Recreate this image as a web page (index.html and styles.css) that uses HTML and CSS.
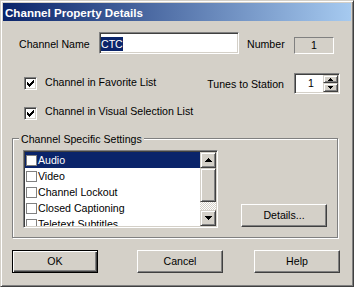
FILE: index.html
```html
<!DOCTYPE html>
<html>
<head>
<meta charset="utf-8">
<title>Channel Property Details</title>
<link rel="stylesheet" href="styles.css">
</head>
<body>
<div class="window">
  <div class="titlebar">Channel Property Details</div>
  <div class="content">
    <div class="row row-name">
      <span class="lbl lbl-name">Channel Name</span>
      <div class="edit"><span class="sel">CTC</span></div>
      <span class="lbl lbl-number">Number</span>
      <div class="static-box">1</div>
    </div>
    <div class="row row-fav">
      <span class="check"><svg width="9" height="9" viewBox="0 0 9 9"><path d="M1 3h1v1h1v1h1V4h1V3h1V2h1V1h1v3H7v1H6v1H5v1H4v1H3V7H2V6H1z"/></svg></span>
      <span class="lbl cb-text">Channel in Favorite List</span>
      <span class="lbl lbl-tunes">Tunes to Station</span>
      <div class="spin">
        <span class="spin-val">1</span>
        <div class="spin-btns">
          <div class="spin-btn up"><svg width="5" height="3" viewBox="0 0 5 3"><path d="M2 0h1v1h1v1h1v1H0V2h1V1h1z"/></svg></div>
          <div class="spin-btn down"><svg width="5" height="3" viewBox="0 0 5 3"><path d="M0 0h5v1H4v1H3v1H2V2H1V1H0z"/></svg></div>
        </div>
      </div>
    </div>
    <div class="row row-vis">
      <span class="check"><svg width="9" height="9" viewBox="0 0 9 9"><path d="M1 3h1v1h1v1h1V4h1V3h1V2h1V1h1v3H7v1H6v1H5v1H4v1H3V7H2V6H1z"/></svg></span>
      <span class="lbl cb-text">Channel in Visual Selection List</span>
    </div>
    <div class="group">
      <div class="group-title">Channel Specific Settings</div>
      <div class="group-body">
        <div class="listbox">
          <ul class="items">
            <li class="selected"><span class="lcb"></span>Audio</li>
            <li><span class="lcb"></span>Video</li>
            <li><span class="lcb"></span>Channel Lockout</li>
            <li><span class="lcb"></span>Closed Captioning</li>
            <li><span class="lcb"></span>Teletext Subtitles</li>
          </ul>
          <div class="vscroll">
            <div class="sb-btn"><svg width="7" height="4" viewBox="0 0 7 4"><path d="M3 0h1v1h1v1h1v1h1v1H0V3h1V2h1V1h1z"/></svg></div>
            <div class="sb-thumb"></div>
            <div class="sb-track"></div>
            <div class="sb-btn"><svg width="7" height="4" viewBox="0 0 7 4"><path d="M0 0h7v1H6v1H5v1H4v1H3V3H2V2H1V1H0z"/></svg></div>
          </div>
        </div>
        <div class="btn btn-details">Details...</div>
      </div>
    </div>
    <div class="buttons">
      <div class="btn btn-default">OK</div>
      <div class="btn btn-cancel">Cancel</div>
      <div class="btn btn-help">Help</div>
    </div>
  </div>
</div>
</body>
</html>
```
FILE: styles.css
```css
* { box-sizing: border-box; }
html, body { margin: 0; padding: 0; }
body {
  width: 354px;
  height: 287px;
  overflow: hidden;
  background: #D4D0C8;
  font-family: "Liberation Sans", Arial, sans-serif;
  font-size: 10.6px;
  color: #000;
}
.window {
  width: 354px;
  height: 287px;
  border: 1px solid;
  border-color: #D4D0C8 #404040 #404040 #D4D0C8;
  box-shadow: inset 1px 1px #fff, inset -1px -1px #808080;
  padding: 2px;
  display: flex;
  flex-direction: column;
  background: #D4D0C8;
}
.titlebar {
  flex: none;
  height: 18px;
  background: linear-gradient(to right, #0A246A, #A6CAF0);
  color: #fff;
  font-weight: bold;
  font-size: 11.6px;
  line-height: 13px;
  display: flex;
  align-items: center;
  padding-left: 2px;
  white-space: nowrap;
}
.content {
  flex: 1;
  display: flex;
  flex-direction: column;
}
.row {
  flex: none;
  display: flex;
  align-items: flex-start;
}
.lbl {
  line-height: 13px;
  white-space: nowrap;
}

/* row 1 */
.row-name { margin-top: 11px; height: 22px; padding-left: 16px; }
.lbl-name { width: 80px; margin-top: 6px; }
.edit {
  width: 140px;
  height: 22px;
  border: 1px solid;
  border-color: #808080 #fff #fff #808080;
  box-shadow: inset 1px 1px #404040, inset -1px -1px #D4D0C8;
  background: #fff;
  padding: 4px 0 0 1px;
}
.sel {
  display: block;
  width: fit-content;
  height: 14px;
  line-height: 14px;
  background: #0A246A;
  color: #fff;
}
.lbl-number { margin-left: 8px; width: 47px; margin-top: 6px; }
.static-box {
  width: 40px;
  height: 17px;
  margin-top: 5px;
  border: 1px solid;
  border-color: #808080 #fff #fff #808080;
  text-align: center;
  line-height: 15px;
}

/* checkboxes */
.check {
  flex: none;
  width: 13px;
  height: 13px;
  border: 1px solid;
  border-color: #808080 #fff #fff #808080;
  box-shadow: inset 1px 1px #404040, inset -1px -1px #D4D0C8;
  background: #fff;
  padding: 1px;
  display: block;
}
.check svg { display: block; }
.cb-text { margin-left: 8px; }

.row-fav { margin-top: 19px; height: 21px; padding-left: 21px; }
.row-fav .check { margin-top: 4px; }
.row-fav .cb-text { margin-top: 3px; }
.lbl-tunes { margin-left: auto; margin-top: 5px; }
.spin {
  width: 46px;
  height: 21px;
  margin-left: 10px;
  margin-right: 11px;
  border: 1px solid;
  border-color: #808080 #fff #fff #808080;
  box-shadow: inset 1px 1px #404040, inset -1px -1px #D4D0C8;
  background: #fff;
  padding: 1px;
  display: flex;
}
.spin-val {
  flex: 1;
  text-align: right;
  padding-right: 9px;
  line-height: 17px;
}
.spin-btns {
  width: 15px;
  display: flex;
  flex-direction: column;
}
.spin-btn {
  background: #D4D0C8;
  border: 1px solid;
  border-color: #D4D0C8 #404040 #404040 #D4D0C8;
  box-shadow: inset 1px 1px #fff, inset -1px -1px #808080;
  display: flex;
  align-items: center;
  justify-content: center;
}
.spin-btn.up { height: 8px; }
.spin-btn.down { height: 9px; }
.spin-btn svg { display: block; }

.row-vis { margin-top: 11px; height: 15px; padding-left: 21px; }
.row-vis .check { margin-top: 2px; }

/* group box */
.group {
  flex: none;
  margin-top: 18px;
  margin-left: 9px;
  width: 326px;
  height: 100px;
  border: 1px solid #808080;
  box-shadow: inset 1px 1px #fff, 1px 1px #fff;
}
.group-title {
  width: fit-content;
  margin: -6px 0 0 6px;
  padding: 0 2px;
  background: #D4D0C8;
  line-height: 13px;
  white-space: nowrap;
}
.group-body {
  display: flex;
  align-items: flex-start;
  margin-top: 4px;
  padding-left: 10px;
}
.listbox {
  flex: none;
  width: 195px;
  height: 78px;
  border: 1px solid;
  border-color: #808080 #fff #fff #808080;
  box-shadow: inset 1px 1px #404040, inset -1px -1px #D4D0C8;
  background: #fff;
  padding: 1px;
  display: flex;
}
.items {
  flex: 1;
  margin: 0;
  padding: 0;
  list-style: none;
  overflow: hidden;
}
.items li {
  height: 16px;
  line-height: 16px;
  display: flex;
  align-items: flex-start;
  padding-left: 1px;
  white-space: nowrap;
}
.items li.selected { background: #0A246A; color: #fff; }
.lcb {
  flex: none;
  width: 11px;
  height: 11px;
  margin-top: 3px;
  margin-right: 1px;
  border: 1px solid #808080;
  background: #fff;
}
.vscroll {
  flex: none;
  width: 16px;
  display: flex;
  flex-direction: column;
}
.sb-btn, .sb-thumb {
  flex: none;
  background: #D4D0C8;
  border: 1px solid;
  border-color: #D4D0C8 #404040 #404040 #D4D0C8;
  box-shadow: inset 1px 1px #fff, inset -1px -1px #808080;
}
.sb-btn {
  height: 16px;
  display: flex;
  align-items: center;
  justify-content: center;
}
.sb-btn svg { display: block; }
.sb-thumb { height: 34px; }
.sb-track {
  flex: 1;
  background: repeating-conic-gradient(#fff 0 25%, #D4D0C8 0 50%) 0 0 / 2px 2px;
}

/* buttons */
.btn {
  flex: none;
  width: 86px;
  height: 23px;
  background: #D4D0C8;
  border: 1px solid;
  border-color: #fff #404040 #404040 #fff;
  box-shadow: inset -1px -1px #808080;
  display: flex;
  align-items: center;
  justify-content: center;
  line-height: 13px;
  white-space: nowrap;
}
.btn-details { margin-left: 23px; margin-top: 54px; }
.buttons {
  flex: none;
  display: flex;
  margin-top: 12px;
  padding-left: 9px;
}
.btn-default {
  border-color: #000;
  box-shadow: inset 1px 1px #fff, inset -1px -1px #404040, inset -2px -2px #808080;
}
.btn-cancel { margin-left: 39px; }
.btn-help { margin-left: 31px; }
```
